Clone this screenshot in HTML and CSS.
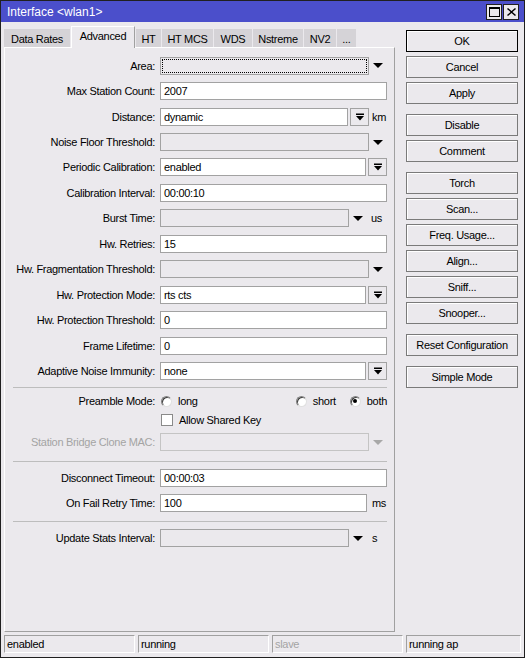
FILE: index.html
```html
<!DOCTYPE html>
<html>
<head>
<meta charset="utf-8">
<link rel="stylesheet" href="styles.css">
</head>
<body>
<div class="win">
  <div class="titlebar">
    <span class="title">Interface &lt;wlan1&gt;</span>
    <div class="tbtns">
      <div class="tbtn"><svg width="11" height="10" viewBox="0 0 11 10"><rect x="0.5" y="0.5" width="10" height="9" fill="none" stroke="#000"/><rect x="0" y="0" width="11" height="2" fill="#000"/></svg></div>
      <div class="tbtn"><svg width="9" height="8" viewBox="0 0 9 8"><path d="M1 0 L4.5 3 L8 0 L9 1 L5.5 4 L9 7 L8 8 L4.5 5 L1 8 L0 7 L3.5 4 L0 1 Z" fill="#000"/></svg></div>
    </div>
  </div>
  <div class="main">
    <div class="left">
      <div class="tabs">
        <div class="tab t1">Data Rates</div>
        <div class="tab sel t2">Advanced</div>
        <div class="tab t3">HT</div>
        <div class="tab t4">HT MCS</div>
        <div class="tab t5">WDS</div>
        <div class="tab t6">Nstreme</div>
        <div class="tab t7">NV2</div>
        <div class="tab t8">...</div>
      </div>
      <div class="panel">
        <div class="sec1">
          <div class="row"><div class="lbl">Area:</div><div class="field"><div class="box dis focus"></div><div class="arrow"><svg width="10" height="5" viewBox="0 0 10 5"><polygon points="0,0 10,0 5,5" fill="#000"/></svg></div></div></div>
          <div class="row"><div class="lbl">Max Station Count:</div><div class="field"><div class="box">2007</div></div></div>
          <div class="row"><div class="lbl">Distance:</div><div class="field"><div class="box">dynamic</div><div class="dbtn"><svg width="8" height="8" viewBox="0 0 8 8"><rect x="0" y="0.5" width="8" height="1.5" fill="#000"/><polygon points="0,3 8,3 4,7.5" fill="#000"/></svg></div><div class="unit km">km</div></div></div>
          <div class="row"><div class="lbl">Noise Floor Threshold:</div><div class="field"><div class="box dis"></div><div class="arrow"><svg width="10" height="5" viewBox="0 0 10 5"><polygon points="0,0 10,0 5,5" fill="#000"/></svg></div></div></div>
          <div class="row"><div class="lbl">Periodic Calibration:</div><div class="field"><div class="box">enabled</div><div class="dbtn"><svg width="8" height="8" viewBox="0 0 8 8"><rect x="0" y="0.5" width="8" height="1.5" fill="#000"/><polygon points="0,3 8,3 4,7.5" fill="#000"/></svg></div></div></div>
          <div class="row"><div class="lbl">Calibration Interval:</div><div class="field"><div class="box">00:00:10</div></div></div>
          <div class="row"><div class="lbl">Burst Time:</div><div class="field"><div class="box dis"></div><div class="arrow"><svg width="10" height="5" viewBox="0 0 10 5"><polygon points="0,0 10,0 5,5" fill="#000"/></svg></div><div class="unit">us</div></div></div>
          <div class="row"><div class="lbl">Hw. Retries:</div><div class="field"><div class="box">15</div></div></div>
          <div class="row"><div class="lbl">Hw. Fragmentation Threshold:</div><div class="field"><div class="box dis"></div><div class="arrow"><svg width="10" height="5" viewBox="0 0 10 5"><polygon points="0,0 10,0 5,5" fill="#000"/></svg></div></div></div>
          <div class="row"><div class="lbl">Hw. Protection Mode:</div><div class="field"><div class="box">rts cts</div><div class="dbtn"><svg width="8" height="8" viewBox="0 0 8 8"><rect x="0" y="0.5" width="8" height="1.5" fill="#000"/><polygon points="0,3 8,3 4,7.5" fill="#000"/></svg></div></div></div>
          <div class="row"><div class="lbl">Hw. Protection Threshold:</div><div class="field"><div class="box">0</div></div></div>
          <div class="row"><div class="lbl">Frame Lifetime:</div><div class="field"><div class="box">0</div></div></div>
          <div class="row"><div class="lbl">Adaptive Noise Immunity:</div><div class="field"><div class="box">none</div><div class="dbtn"><svg width="8" height="8" viewBox="0 0 8 8"><rect x="0" y="0.5" width="8" height="1.5" fill="#000"/><polygon points="0,3 8,3 4,7.5" fill="#000"/></svg></div></div></div>
        </div>
        <div class="sep s1"></div>
        <div class="row r-pre"><div class="lbl">Preamble Mode:</div>
          <div class="field opts">
            <div class="opt"><span class="radio"></span><span>long</span></div>
            <div class="opt short"><span class="radio"></span><span>short</span></div>
            <div class="opt both"><span class="radio on"></span><span>both</span></div>
          </div>
        </div>
        <div class="row r-chk"><div class="lbl"></div><div class="field"><div class="opt"><span class="check"></span><span>Allow Shared Key</span></div></div></div>
        <div class="row r-mac"><div class="lbl grey">Station Bridge Clone MAC:</div><div class="field"><div class="box dis light"></div><div class="arrow"><svg width="10" height="5" viewBox="0 0 10 5"><polygon points="0,0 10,0 5,5" fill="#a8a8a8"/></svg></div></div></div>
        <div class="sep s2"></div>
        <div class="row r-disc"><div class="lbl">Disconnect Timeout:</div><div class="field"><div class="box">00:00:03</div></div></div>
        <div class="row r-fail"><div class="lbl">On Fail Retry Time:</div><div class="field"><div class="box">100</div><div class="unit ms">ms</div></div></div>
        <div class="sep s3"></div>
        <div class="row r-upd"><div class="lbl">Update Stats Interval:</div><div class="field"><div class="box dis"></div><div class="arrow"><svg width="10" height="5" viewBox="0 0 10 5"><polygon points="0,0 10,0 5,5" fill="#000"/></svg></div><div class="unit ms">s</div></div></div>
      </div>
    </div>
    <div class="right">
      <div class="btn def">OK</div>
      <div class="btn">Cancel</div>
      <div class="btn">Apply</div>
      <div class="btn grp">Disable</div>
      <div class="btn">Comment</div>
      <div class="btn grp">Torch</div>
      <div class="btn">Scan...</div>
      <div class="btn">Freq. Usage...</div>
      <div class="btn">Align...</div>
      <div class="btn">Sniff...</div>
      <div class="btn">Snooper...</div>
      <div class="btn grp">Reset Configuration</div>
      <div class="btn grp">Simple Mode</div>
    </div>
  </div>
  <div class="status">
    <div class="cell c1">enabled</div>
    <div class="cell c2">running</div>
    <div class="cell c3 grey">slave</div>
    <div class="cell c4">running ap</div>
  </div>
</div>
</body>
</html>
```

FILE: styles.css
```css
html, body {
  margin: 0;
  padding: 0;
  background: #ebe9ed;
}
body {
  font-family: "Liberation Sans", Arial, sans-serif;
  font-size: 11px;
  color: #000;
  letter-spacing: -0.3px;
}
.win {
  width: 525px;
  height: 658px;
  box-sizing: border-box;
  border: 1px solid #202020;
  background: #ebe9ed;
  display: flex;
  flex-direction: column;
}
.titlebar {
  height: 21px;
  background: #4b4fcb;
  color: #fff;
  display: flex;
  align-items: center;
  padding-left: 6px;
  font-size: 12px;
  letter-spacing: 0;
}
.title { flex: 1; }
.tbtns {
  display: flex;
  gap: 1px;
  margin-right: 5px;
}
.tbtn {
  width: 14px;
  height: 14px;
  background: #ebe9ed;
  border: 1px solid #202020;
  display: flex;
  align-items: center;
  justify-content: center;
}
.main {
  display: flex;
  padding: 4px 0 0 3px;
}
.left {
  width: 391px;
  display: flex;
  flex-direction: column;
}
.tabs {
  height: 21px;
  display: flex;
  align-items: flex-end;
  gap: 1px;
}
.tab {
  height: 18px;
  box-sizing: border-box;
  background: #d5d3d7;
  display: flex;
  align-items: center;
  justify-content: center;
  padding-top: 1px;
}
.tab.sel {
  height: 22px;
  margin-bottom: -1px;
  background: #ebe9ed;
  border-top: 1px solid #fff;
  border-left: 1px solid #fff;
  border-right: 1px solid #a0a0a0;
  padding-top: 0;
  padding-bottom: 4px;
  position: relative;
  z-index: 1;
}
.t1 { width: 66px; }
.t2 { width: 64px; }
.t3 { width: 25px; }
.t4 { width: 51px; }
.t5 { width: 38px; }
.t6 { width: 50px; }
.t7 { width: 32px; }
.t8 { width: 19px; }
.panel {
  height: 585px;
  box-sizing: border-box;
  border-top: 1px solid #fff;
  border-left: 1px solid #fff;
  border-right: 1px solid #a0a0a0;
  border-bottom: 1px solid #a0a0a0;
  padding-top: 5px;
  display: flex;
  flex-direction: column;
}
.row {
  height: 25.45px;
  display: flex;
  align-items: center;
  flex-shrink: 0;
}
.lbl {
  width: 150px;
  text-align: right;
  white-space: nowrap;
  margin-right: 5px;
}
.grey { color: #a4a4a4; }
.field {
  width: 227px;
  display: flex;
  align-items: center;
}
.box {
  flex: 1;
  height: 18px;
  box-sizing: border-box;
  border: 1px solid #a2a2a2;
  background: #fff;
  padding-left: 3px;
  line-height: 16px;
  white-space: nowrap;
}
.box.dis { background: #ebe9ed; }
.box.light { border-color: #c4c4c4; }
.box.focus {
  outline: 1px dotted #000;
  outline-offset: -3px;
}
.arrow {
  width: 18px;
  display: flex;
  justify-content: center;
  align-items: center;
}
.dbtn {
  width: 19px;
  height: 18px;
  box-sizing: border-box;
  margin-left: 2px;
  border: 1px solid #a2a2a2;
  background: #ebe9ed;
  display: flex;
  align-items: center;
  justify-content: center;
}
.unit {
  width: 20px;
  box-sizing: border-box;
  padding-left: 4px;
}
.unit.km { width: 18px; padding-left: 3px; }
.unit.ms { padding-left: 5px; }
.sep {
  height: 1px;
  background: #bdbdbd;
  margin-left: 8px;
  width: 374px;
  flex-shrink: 0;
}
.s1 { margin-top: 3.5px; }
.r-pre { height: 26px; }
.r-chk { height: 12px; }
.r-mac { height: 32px; }
.s2 { margin-top: 3px; }
.r-disc { height: 32px; }
.r-fail { height: 18px; }
.s3 { margin-top: 9px; }
.r-upd { height: 32px; }
.opts { justify-content: flex-start; }
.opt {
  display: flex;
  align-items: center;
  gap: 6px;
}
.opt.short { margin-left: auto; }
.opt.both { margin-left: 13px; }
.radio {
  width: 11px;
  height: 11px;
  box-sizing: border-box;
  border-radius: 50%;
  background: #fff;
  border: 1px solid;
  border-color: #808080 #e0e0e0 #e0e0e0 #808080;
  box-shadow: inset 1px 1px 0 #404040;
  margin-left: 1px;
  display: flex;
  align-items: center;
  justify-content: center;
}
.radio.on::after {
  content: "";
  width: 4px;
  height: 4px;
  border-radius: 50%;
  background: #000;
}
.check {
  width: 12px;
  height: 12px;
  box-sizing: border-box;
  background: #fff;
  border: 1px solid #8a8a8a;
  margin-left: 1px;
}
.right {
  width: 112px;
  margin-left: 11px;
  padding-top: 4px;
  display: flex;
  flex-direction: column;
  gap: 4px;
}
.btn {
  height: 22px;
  box-sizing: border-box;
  border: 1px solid #7a7a7a;
  box-shadow: inset 1px 1px 0 #fff;
  background: #ebe9ed;
  display: flex;
  align-items: center;
  justify-content: center;
  white-space: nowrap;
}
.btn.def { border-color: #000; }
.btn.grp { margin-top: 6px; }
.status {
  display: flex;
  gap: 3px;
  padding: 3px 0 0 3px;
}
.cell {
  height: 18px;
  box-sizing: border-box;
  border-top: 1px solid #a0a0a0;
  border-left: 1px solid #a0a0a0;
  border-bottom: 1px solid #fff;
  border-right: 1px solid #fff;
  padding-left: 2px;
  line-height: 16px;
  white-space: nowrap;
}
.c1 { width: 131px; }
.c2 { width: 131px; }
.c3 { width: 131px; }
.c4 { width: 115px; }
```
